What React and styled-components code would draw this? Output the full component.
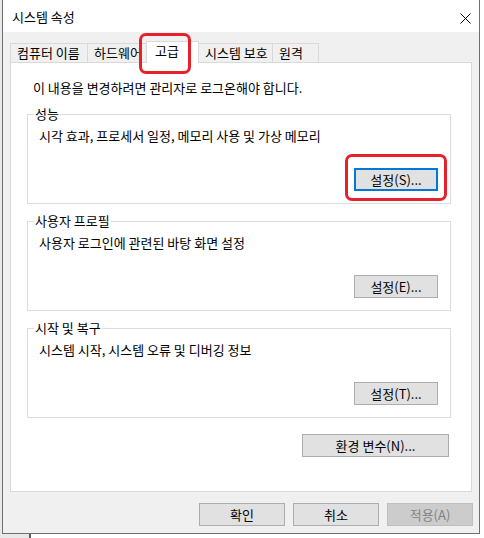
import React from "react";
import styled, { createGlobalStyle, css } from "styled-components";

const GlobalStyle = createGlobalStyle`
  html, body {
    margin: 0;
    padding: 0;
  }
  body {
    width: 484px;
    height: 538px;
    overflow: hidden;
    background: linear-gradient(to right, #e9e9e9 0 29px, #5c5c5c 29px 31px, #ffffff 31px);
    font-family: "Noto Sans CJK KR", "Noto Sans", sans-serif;
    font-size: 13px;
    color: #000;
  }
  *, *::before, *::after {
    box-sizing: border-box;
  }
`;

// red annotation frame drawn over a tab or a button
const markCss = css`
  position: relative;
  &::after {
    content: "";
    position: absolute;
    left: ${(p) => p.$mark.x}px;
    top: ${(p) => p.$mark.y}px;
    width: ${(p) => p.$mark.w}px;
    height: ${(p) => p.$mark.h}px;
    border: 3px solid #e6212b;
    border-radius: 7px;
    pointer-events: none;
  }
`;

const Window = styled.div`
  margin-left: 2px;
  width: 478px;
  background: #f0f0f0;
  border: 1px solid #6f6f6f;
  border-top: none;
  display: flex;
  flex-direction: column;
`;

const TitleBar = styled.div`
  height: 32px;
  background: #fff;
  display: flex;
  align-items: flex-start;
  justify-content: space-between;
  padding-left: 9px;
`;

const Title = styled.span`
  margin-top: 9px;
  line-height: 16px;
`;

const Close = styled.svg`
  margin-top: 13px;
  margin-right: 8px;
`;

const Body = styled.div`
  padding: 9px 7px 7px;
  display: flex;
  flex-direction: column;
`;

const TabRow = styled.div`
  display: flex;
  align-items: flex-end;
  height: 21px;
`;

const Tab = styled.div`
  width: ${(p) => p.$w}px;
  height: 19px;
  margin-left: -1px;
  padding-left: 6px;
  line-height: 17px;
  white-space: nowrap;
  overflow: hidden;
  background: #f0f0f0;
  border: 1px solid #d9d9d9;
  border-bottom: none;
  &:first-child {
    margin-left: 0;
  }
  ${(p) =>
    p.$active &&
    css`
      position: relative;
      z-index: 2;
      height: 22px;
      margin-bottom: -1px;
      padding-left: 8px;
      line-height: 18px;
      background: #fff;
      overflow: visible;
    `}
  ${(p) => p.$mark && markCss}
`;

const Panel = styled.div`
  height: 430px;
  background: #fff;
  border: 1px solid #d9d9d9;
  padding: 17px 22px 0 16px;
  display: flex;
  flex-direction: column;
`;

const Note = styled.div`
  padding-left: 6px;
  line-height: 16px;
`;

const Group = styled.div`
  position: relative;
  width: 424px;
  height: 90px;
  margin-top: ${(p) => p.$gap}px;
  border: 1px solid #dcdcdc;
  padding: 13px 12px 0 11px;
  display: flex;
  flex-direction: column;
`;

const GroupLabel = styled.span`
  position: absolute;
  left: 6px;
  top: -9px;
  padding: 0 1px;
  background: #fff;
  line-height: 16px;
`;

const GroupText = styled.div`
  line-height: 16px;
`;

const Button = styled.button`
  width: ${(p) => p.$w}px;
  height: 23px;
  padding: 0;
  font: inherit;
  color: #000;
  background: #e1e1e1;
  border: 1px solid #adadad;
  align-self: flex-end;
  margin-top: ${(p) => p.$top || 0}px;
  ${(p) =>
    p.$focused &&
    css`
      border-color: #0078d7;
      box-shadow: inset 0 0 0 1px #0078d7;
    `}
  &:disabled {
    color: #838383;
    background: #cccccc;
    border-color: #bfbfbf;
  }
  ${(p) => p.$mark && markCss}
`;

const Footer = styled.div`
  display: flex;
  justify-content: flex-end;
  gap: 8px;
  margin-top: 11px;
  padding-right: 6px;
  margin-right: -7px;
`;

const tabs = [
  { label: "컴퓨터 이름", w: 78 },
  { label: "하드웨어", w: 60 },
  { label: "고급", w: 53, active: true, mark: { x: -8, y: -9, w: 52, h: 41 } },
  { label: "시스템 보호", w: 75 },
  { label: "원격", w: 47 },
];

const groups = [
  {
    title: "성능",
    text: "시각 효과, 프로세서 일정, 메모리 사용 및 가상 메모리",
    button: "설정(S)...",
    focused: true,
    mark: { x: -10, y: -15, w: 102, h: 47 },
    gap: 18,
  },
  { title: "사용자 프로필", text: "사용자 로그인에 관련된 바탕 화면 설정", button: "설정(E)...", gap: 17 },
  { title: "시작 및 복구", text: "시스템 시작, 시스템 오류 및 디버깅 정보", button: "설정(T)...", gap: 17 },
];

export default function App() {
  return (
    <>
      <GlobalStyle />
      <Window>
        <TitleBar>
          <Title>시스템 속성</Title>
          <Close width="11" height="11" viewBox="0 0 11 11">
            <path d="M0.5 0.5 L10.5 10.5 M10.5 0.5 L0.5 10.5" stroke="#000" strokeWidth="1" fill="none" />
          </Close>
        </TitleBar>
        <Body>
          <TabRow>
            {tabs.map((t) => (
              <Tab key={t.label} $w={t.w} $active={t.active} $mark={t.mark}>
                {t.label}
              </Tab>
            ))}
          </TabRow>
          <Panel>
            <Note>이 내용을 변경하려면 관리자로 로그온해야 합니다.</Note>
            {groups.map((g) => (
              <Group key={g.title} $gap={g.gap}>
                <GroupLabel>{g.title}</GroupLabel>
                <GroupText>{g.text}</GroupText>
                <Button $w={84} $top={24} $focused={g.focused} $mark={g.mark}>
                  {g.button}
                </Button>
              </Group>
            ))}
            <Button $w={147} $top={16}>
              환경 변수(N)...
            </Button>
          </Panel>
          <Footer>
            <Button $w={86}>확인</Button>
            <Button $w={86}>취소</Button>
            <Button $w={86} disabled>
              적용(A)
            </Button>
          </Footer>
        </Body>
      </Window>
    </>
  );
}
